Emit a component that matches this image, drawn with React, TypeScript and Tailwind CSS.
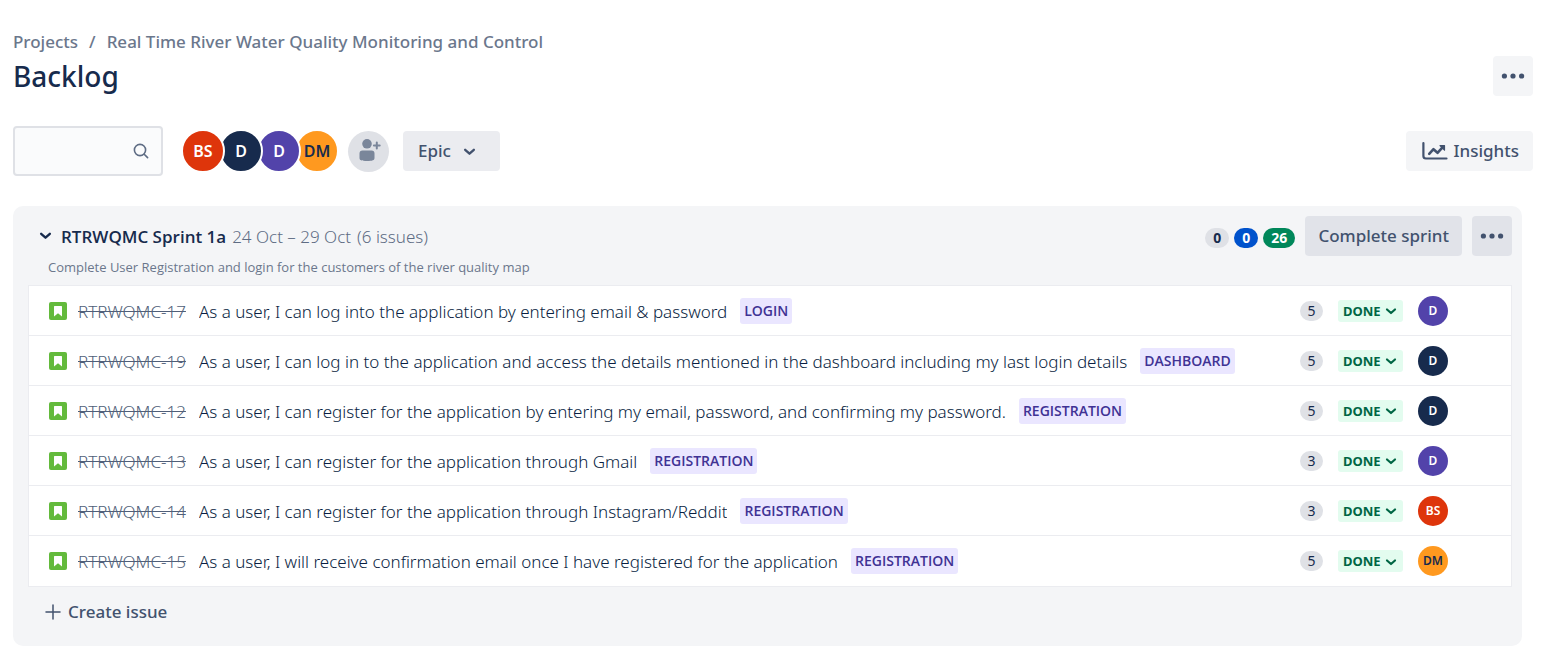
import { useState } from "react";

type Person = { initials: string; className: string };

const people: Record<string, Person> = {
  bs: { initials: "BS", className: "bg-[#de350b] text-white" },
  navy: { initials: "D", className: "bg-[#172b4d] text-white" },
  purple: { initials: "D", className: "bg-[#5243aa] text-white" },
  dm: { initials: "DM", className: "bg-[#ff991f] text-[#172b4d]" },
};

const team = [
  { ...people.bs, layer: "z-40" },
  { ...people.navy, layer: "z-30" },
  { ...people.purple, layer: "z-20" },
  { ...people.dm, layer: "z-10" },
];

const issues = [
  { id: "RTRWQMC-17", title: "As a user, I can log into the application by entering email & password", epic: "LOGIN", points: 5, who: people.purple },
  { id: "RTRWQMC-19", title: "As a user, I can log in to the application and access the details mentioned in the dashboard including my last login details", epic: "DASHBOARD", points: 5, who: people.navy },
  { id: "RTRWQMC-12", title: "As a user, I can register for the application by entering my email, password, and confirming my password.", epic: "REGISTRATION", points: 5, who: people.navy },
  { id: "RTRWQMC-13", title: "As a user, I can register for the application through Gmail", epic: "REGISTRATION", points: 3, who: people.purple },
  { id: "RTRWQMC-14", title: "As a user, I can register for the application through Instagram/Reddit", epic: "REGISTRATION", points: 3, who: people.bs },
  { id: "RTRWQMC-15", title: "As a user, I will receive confirmation email once I have registered for the application", epic: "REGISTRATION", points: 5, who: people.dm },
];

function Chevron({ className }: { className: string }) {
  return (
    <svg viewBox="0 0 12 12" className={className} fill="none" stroke="currentColor" strokeWidth="2.2" strokeLinecap="round" strokeLinejoin="round" aria-hidden="true">
      <path d="M2 4.5l4 3.5 4-3.5" />
    </svg>
  );
}

function Dots() {
  return (
    <svg viewBox="0 0 24 6" className="h-[6px] w-6" fill="currentColor" aria-hidden="true">
      <circle cx="3.4" cy="3" r="2.6" />
      <circle cx="12" cy="3" r="2.6" />
      <circle cx="20.6" cy="3" r="2.6" />
    </svg>
  );
}

function StoryIcon() {
  return (
    <svg viewBox="0 0 18 18" className="size-[18px] shrink-0" aria-hidden="true">
      <rect width="18" height="18" rx="2" fill="#63ba3c" />
      <path d="M5.6 4h6.8c.4 0 .6.2.6.6V14.6L9 11.2 5 14.6V4.6c0-.4.2-.6.6-.6z" fill="#fff" />
    </svg>
  );
}

function IssueRow({ issue }: { issue: (typeof issues)[number] }) {
  const [status, setStatus] = useState("DONE");
  return (
    <li className="flex h-[50px] items-center border-b border-[#ebecf0] pr-[63px] pl-5 last:border-b-0">
      <StoryIcon />
      <a href={`#${issue.id}`} className="ml-[11px] shrink-0 pt-[2px] text-[17px] leading-6 font-light text-[#505f79] line-through">
        {issue.id}
      </a>
      <span className="ml-[13px] truncate pt-[2px] text-[17px] leading-6 font-light text-[#091e42]">{issue.title}</span>
      <span className="ml-[13px] shrink-0 rounded-[3px] bg-[#eae6ff] px-1 font-['Open_Sans',sans-serif] text-[14px] leading-[26px] font-semibold text-[#403294]">
        {issue.epic}
      </span>
      <span className="ml-auto w-[23px] shrink-0 rounded-full bg-[#dfe1e6] text-center text-[14px] leading-5">
        {issue.points}
      </span>
      <div className="ml-[15px] grid h-[22px] w-[65px] shrink-0 items-center rounded-[3px] bg-[#e3fcef] text-[#006644]">
        <select
          aria-label={`Status of ${issue.id}`}
          value={status}
          onChange={(e) => setStatus(e.target.value)}
          className="col-start-1 row-start-1 h-[22px] w-full appearance-none bg-transparent pl-[5px] text-[13px] leading-[22px] font-bold"
        >
          <option>DONE</option>
        </select>
        <Chevron className="pointer-events-none col-start-1 row-start-1 mt-px mr-[6px] size-3 justify-self-end" />
      </div>
      <span className={`ml-[15px] flex size-[30px] shrink-0 items-center justify-center rounded-full text-[12px] font-semibold ${issue.who.className}`}>
        {issue.who.initials}
      </span>
    </li>
  );
}

export default function App() {
  return (
    <div className="bg-white pt-[30px] pr-[17px] pb-6 pl-[13px] font-['Noto_Sans',sans-serif] text-[#172b4d]">
      <nav aria-label="Breadcrumb" className="flex gap-[11px] text-[17px] leading-6 font-medium text-[#6b778c]">
        <a href="#projects">Projects</a>
        <span>/</span>
        <a href="#project">Real Time River Water Quality Monitoring and Control</a>
      </nav>
      <header className="mt-[2px] flex items-center justify-between">
        <h1 className="text-[28px] leading-10 font-medium">Backlog</h1>
        <button aria-label="More actions" className="flex size-10 items-center justify-center rounded-[4px] bg-[#f4f5f7] text-[#42526e]">
          <Dots />
        </button>
      </header>

      <div className="mt-[30px] flex items-center">
        <label className="flex h-[50px] w-[150px] items-center rounded-[4px] border-2 border-[#dfe1e6] bg-[#fafbfc] pr-3">
          <input type="text" aria-label="Search backlog" className="min-w-0 flex-1 bg-transparent px-2 outline-none" />
          <svg viewBox="0 0 16 16" className="size-4 text-[#5e6c84]" fill="none" stroke="currentColor" strokeWidth="1.6" strokeLinecap="round" aria-hidden="true">
            <circle cx="7" cy="7" r="5.6" />
            <path d="M11.2 11.2L14.6 14.6" />
          </svg>
        </label>
        <div className="ml-[18px] flex -space-x-[6px]">
          {team.map((p) => (
            <button
              key={p.layer}
              className={`relative flex size-11 items-center justify-center rounded-full border-2 border-white text-[16px] font-semibold ${p.layer} ${p.className}`}
            >
              {p.initials}
            </button>
          ))}
        </div>
        <button aria-label="Add people" className="ml-[9px] flex size-[41px] items-center justify-center rounded-full bg-[#dfe1e6] text-[#7a869a]">
          <svg viewBox="0 0 24 24" className="size-6" fill="currentColor" aria-hidden="true">
            <circle cx="10" cy="4.8" r="4.8" />
            <path d="M2.5 14.5a3 3 0 0 1 3-3h9a3 3 0 0 1 3 3v4.5c0 2.2-2 3-7.500 3s-7.500-.8-7.500-3z" />
            <path d="M19.8 3.6v5.8M16.9 6.5h5.8" fill="none" stroke="currentColor" strokeWidth="2" strokeLinecap="round" />
          </svg>
        </button>
        <button className="ml-[14px] flex h-10 w-[97px] items-center gap-3 rounded-[4px] bg-[#ebecf0] pl-[15px] text-[17px] font-medium text-[#42526e]">
          Epic
          <Chevron className="size-[13px]" />
        </button>
        <button className="ml-auto flex h-10 items-center gap-[5px] rounded-[4px] bg-[#f4f5f7] pr-[14px] pl-4 text-[17px] font-medium text-[#42526e]">
          <svg viewBox="0 0 26 20" className="h-5 w-[26px]" fill="none" stroke="currentColor" strokeLinecap="round" strokeLinejoin="round" aria-hidden="true">
            <path d="M1.4 2v13a2.5 2.5 0 0 0 2.5 2.5H24.5" strokeWidth="2.2" />
            <path d="M7.2 12.8l4.3-4.6 4 3.6 5.5-6" strokeWidth="2.6" />
            <path d="M18 4.6h4.5v4.6z" fill="currentColor" strokeWidth="1.2" />
          </svg>
          Insights
        </button>
      </div>

      <section aria-label="RTRWQMC Sprint 1a" className="mt-[30px] mr-[11px] rounded-[10px] bg-[#f4f5f7] px-[10px] pt-[10px] pb-[14px]">
        <div className="flex h-10 items-center">
          <button aria-label="Collapse sprint" className="ml-4 pr-px pb-[2px]">
            <Chevron className="size-[13px]" />
          </button>
          <h2 className="ml-2 pt-[2px] font-['Open_Sans',sans-serif] text-[17px] leading-6 font-semibold">RTRWQMC Sprint 1a</h2>
          <span className="ml-[6px] pt-[2px] text-[17px] leading-6 font-light text-[#5e6c84]">24 Oct – 29 Oct</span>
          <span className="ml-[6px] pt-[2px] text-[17px] leading-6 font-light text-[#5e6c84]">(6 issues)</span>
          <div className="mt-1 ml-auto flex gap-[5px] text-center text-[14px] leading-5 font-bold">
            <span className="w-6 rounded-full bg-[#dfe1e6]">0</span>
            <span className="w-6 rounded-full bg-[#0052cc] text-white">0</span>
            <span className="w-8 rounded-full bg-[#00875a] text-white">26</span>
          </div>
          <button className="ml-[10px] h-10 rounded-[4px] bg-[#e1e3e9] px-[13px] text-[17px] font-medium text-[#42526e]">Complete sprint</button>
          <button aria-label="Sprint actions" className="ml-[10px] flex size-10 items-center justify-center rounded-[4px] bg-[#e1e3e9] text-[#42526e]">
            <Dots />
          </button>
        </div>
        <p className="mt-px ml-[25px] font-['Open_Sans',sans-serif] text-[13px] leading-5 text-[#6b778c]">
          Complete User Registration and login for the customers of the river quality map
        </p>
        <ul className="mt-2 ml-[5px] border border-[#ebecf0] bg-white">
          {issues.map((issue) => (
            <IssueRow key={issue.id} issue={issue} />
          ))}
        </ul>
        <button className="mt-[5px] ml-[21px] flex h-10 items-center gap-[6px] text-[17px] font-medium text-[#42526e]">
          <svg viewBox="0 0 18 18" className="size-[18px]" fill="none" stroke="currentColor" strokeWidth="1.5" strokeLinecap="round" aria-hidden="true">
            <path d="M9 2v14M2 9h14" />
          </svg>
          Create issue
        </button>
      </section>
    </div>
  );
}
